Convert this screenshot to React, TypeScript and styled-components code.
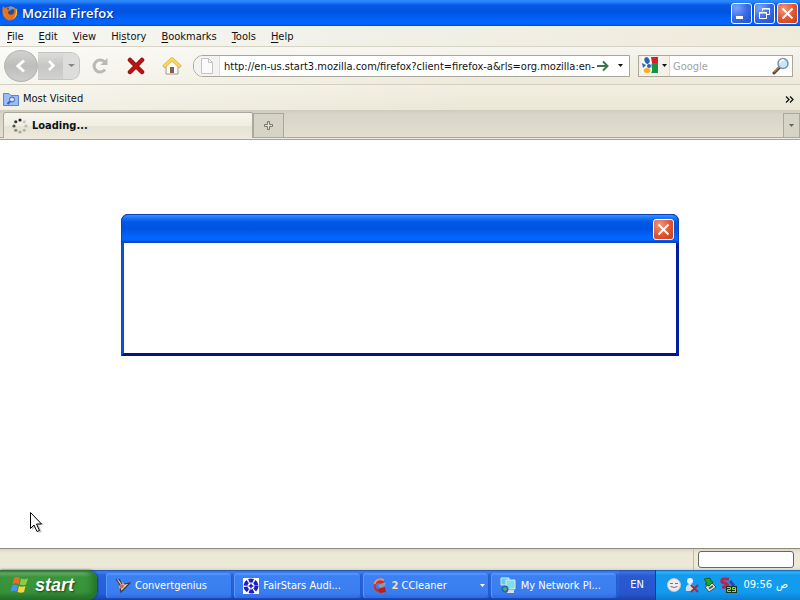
import React from "react";
import styled, { createGlobalStyle } from "styled-components";

const ui = `"DejaVu Sans Condensed", "Noto Sans", "DejaVu Sans", sans-serif`;

const GlobalStyle = createGlobalStyle`
  * { box-sizing: border-box; }
  body { margin: 0; font: 11px/14px ${ui}; color: #111; background: #fff; }
  button, input { font: inherit; color: inherit; margin: 0; padding: 0; border: 0; background: none; }
  button { display: flex; align-items: center; justify-content: center; flex: none; white-space: nowrap; }
  svg { display: block; flex: none; }
`;

const Desktop = styled.div`
  display: flex;
  flex-direction: column;
  min-height: 100vh;
`;

const TitleBar = styled.header`
  display: flex;
  align-items: center;
  height: 26px;
  padding: 0 2px;
  gap: 3px;
  background: linear-gradient(#2f8bfd 0, #2584fa 2px, #0759e4 5px, #0053e1 12px, #0062fb 19px, #0066ff 24px, #0046d6 26px);
`;

const Title = styled.h1`
  flex: 1;
  margin: 0;
  font: 600 13px/18px "Open Sans", "Noto Sans", sans-serif;
  color: #fff;
  text-shadow: 1px 1px 1px #0a2f8c;
`;

const CaptionButton = styled.button<{ $close?: boolean }>`
  width: 21px;
  height: 21px;
  border: 1px solid #fff;
  border-radius: 3px;
  background: ${(p) =>
    p.$close
      ? "radial-gradient(circle at 30% 25%, #f0967c, #e2532f 55%, #c8401c)"
      : "radial-gradient(circle at 25% 20%, #7ba6f5, #3a6be6 50%, #1c4fd0)"};
`;

const CaptionGroup = styled.div`
  display: flex;
  gap: 2px;
`;

const MenuBar = styled.nav`
  display: flex;
  align-items: center;
  gap: 15px;
  height: 21px;
  padding: 1px 7px 0;
  background: linear-gradient(90deg, #f6f6f3, #f1f0e7 50%, #eeebdb);
  border-bottom: 1px solid #d6d3c5;
  u { text-underline-offset: 2px; }
`;

const NavBar = styled.div`
  display: flex;
  align-items: center;
  height: 38px;
  padding: 0 7px 0 4px;
  background: linear-gradient(90deg, rgba(255,255,255,.55), rgba(255,255,255,0) 60%), linear-gradient(#f6f5ee, #edeada);
  border-bottom: 1px solid #d3d0c0;
`;

const History = styled.div`
  display: flex;
  align-items: center;
  height: 32px;
  margin-right: 2px;
`;

const BackButton = styled.button`
  width: 34px;
  height: 32px;
  border: 1px solid #b4b4b2;
  border-radius: 50%;
  background: linear-gradient(#d2d2d1, #bdbdbc 50%, #cecece);
`;

const ForwardGroup = styled.div`
  display: flex;
  height: 28px;
  border: 1px solid #c4c4c2;
  border-left: 0;
  border-radius: 0 9px 9px 0;
  background: linear-gradient(#dcdcda, #c6c6c5 50%, #d2d2d0);
`;

const ForwardButton = styled.button`
  width: 25px;
`;

const HistoryMenu = styled.button`
  width: 16px;
  border-radius: 0 8px 8px 0;
  background: #dddddb;
`;

const ToolButton = styled.button`
  width: 36px;
  height: 30px;
`;

const AddressBox = styled.form`
  display: flex;
  flex: 1;
  min-width: 0;
  height: 22px;
  margin: 0 8px 0 3px;
  border: 1px solid #a9a79c;
  border-radius: 10px 0 0 10px;
  background: #fff;
  overflow: hidden;
`;

const Identity = styled.button`
  width: 26px;
  border-right: 1px solid #dedede;
  background: #f3f3f1;
`;

const AddressInput = styled.input`
  flex: 1;
  min-width: 0;
  padding: 2px 0 0 4px;
  outline: none;
`;

const GoButton = styled.button`
  width: 16px;
`;

const DropButton = styled.button`
  width: 18px;
`;

const SearchBox = styled.form`
  display: flex;
  flex: none;
  width: 155px;
  height: 22px;
  border: 1px solid #a9a79c;
  background: #fff;
`;

const EngineButton = styled.button`
  gap: 3px;
  width: 31px;
  border-right: 1px solid #dbd8ca;
  background: #f4f2e8;
`;

const SearchInput = styled.input`
  flex: 1;
  min-width: 0;
  padding: 2px 3px 0;
  outline: none;
  &::placeholder { color: #a3a3a3; opacity: 1; }
`;

const SearchButton = styled.button`
  width: 22px;
`;

const BookmarkBar = styled.div`
  display: flex;
  align-items: center;
  justify-content: space-between;
  height: 25px;
  padding: 3px 6px 0 3px;
  background: linear-gradient(90deg, rgba(255,255,255,.4), rgba(255,255,255,0) 60%), linear-gradient(#f1efe2, #eae7d6);
`;

const Bookmark = styled.button`
  gap: 4px;
`;

const TabBar = styled.div`
  display: flex;
  align-items: flex-end;
  height: 30px;
  padding: 3px 0 1px 3px;
  border-bottom: 1px solid #a5a398;
  background: linear-gradient(#cfccbf 0, #d8d5c8 4px, #e2dfd1 27px, #aaa89c 27px, #aaa89c 28px, #eeebde 28px);
`;

const Tab = styled.button`
  justify-content: flex-start;
  gap: 4px;
  width: 250px;
  height: 26px;
  padding: 1px 8px 0;
  border: 1px solid #aaa89c;
  border-bottom: 0;
  border-radius: 3px 2px 0 0;
  background: linear-gradient(#f7f6ee, #f0eee2 50%, #e6e3d4 52%, #edeadd);
  font-weight: bold;
`;

const TabTool = styled.button<{ $end?: boolean }>`
  width: ${(p) => (p.$end ? 17 : 31)}px;
  height: 24px;
  margin-left: ${(p) => (p.$end ? "auto" : 0)};
  margin-bottom: 1px;
  border: 1px solid #aaa89c;
  border-bottom: 0;
  background: #d6d3c7;
`;

const Page = styled.main`
  flex: 1;
  padding: 74px 16px;
  background: #fff;
`;

const Dialog = styled.section`
  max-width: 558px;
  margin: 0 auto;
  border: solid #00138c;
  border-color: #0831d9 #001ea0 #00138c #0b4fd8;
  border-width: 0 3px 3px;
  border-radius: 7px 7px 0 0;
  background: #0053e1;
`;

const DialogTitle = styled.div`
  display: flex;
  align-items: center;
  justify-content: flex-end;
  height: 29px;
  margin: 0 -3px;
  padding: 2px 4px 0;
  border: 1px solid #0842bd;
  border-radius: 7px 7px 0 0;
  background: linear-gradient(#3a93ff 0, #1775f5 3px, #0058e6 7px, #0053e1 14px, #0066ff 22px, #0066ff 25px, #0045ca);
`;

const DialogBody = styled.div`
  height: 110px;
  background: #fff;
`;

const StatusBar = styled.footer`
  display: flex;
  align-items: center;
  justify-content: flex-end;
  height: 22px;
  padding: 0 6px 0 0;
  border-top: 1px solid #8d8b80;
  background: linear-gradient(#d9d6c9, #ece9d8 4px, #ece9d8 18px, #d9d5c5);
`;

const StatusPanel = styled.div`
  display: flex;
  align-items: center;
  height: 100%;
  padding-left: 4px;
  border-left: 1px solid #c1bdac;
`;

const Progress = styled.div`
  width: 96px;
  height: 17px;
  border: 1px solid #68675f;
  border-radius: 3px;
  background: #fff;
`;

const TaskBar = styled.footer`
  display: flex;
  height: 30px;
  color: #fff;
  background: linear-gradient(#1c4aa8 0, #3f83ee 2px, #2a63dc 5px, #245edb 24px, #1941a5);
`;

const StartButton = styled.button`
  justify-content: flex-start;
  gap: 5px;
  width: 97px;
  margin-right: 9px;
  padding: 0 0 1px 10px;
  border-radius: 0 9px 9px 0;
  background: linear-gradient(#2a6b2c 0, #6cb06a 3px, #3b953b 7px, #36923a 22px, #226a26);
  box-shadow: inset -5px 0 6px #23752a, 1px 0 2px #173c94;
  font: italic bold 18px/22px "Liberation Sans", Arial, sans-serif;
  color: #fff;
  text-shadow: 1px 1px 2px #143f15;
`;

const Tasks = styled.div`
  display: flex;
  flex: 1;
  gap: 2px;
  min-width: 0;
  padding: 3px 2px 2px 0;
`;

const Task = styled.button`
  flex: 1;
  justify-content: flex-start;
  min-width: 0;
  gap: 4px;
  padding: 0 4px 0 9px;
  border-radius: 3px;
  background: linear-gradient(#5c9bfb 0, #3c81f3 3px, #3a7df0 20px, #2e6be0);
  box-shadow: inset 1px 0 #5a98f8, inset -1px 0 #255bd0;
`;

const TaskLabel = styled.span`
  flex: 1;
  overflow: hidden;
  text-overflow: ellipsis;
  text-align: left;
`;

const Count = styled.b`
  color: #fbd9c4;
`;

const Language = styled.button`
  width: 36px;
  background: linear-gradient(#1c4aa8 0, #3a72e4 2px, #2a59d0 6px, #2756cc 24px, #1a41a5);
`;

const Tray = styled.div`
  display: flex;
  align-items: center;
  gap: 2px;
  width: 145px;
  padding: 0 12px 0 10px;
  border-left: 1px solid #0c3f9c;
  background: linear-gradient(#0c59b9 0, #35b3f8 2px, #149bee 5px, #129cf0 22px, #0d7ed0);
  white-space: nowrap;
`;

const Clock = styled.time`
  display: flex;
  gap: 4px;
  margin-left: auto;
`;

const Cursor = styled.svg`
  position: absolute;
  left: 29px;
  top: 511px;
  pointer-events: none;
`;

const CloseGlyph = () => (
  <svg width="15" height="15" viewBox="0 0 15 15">
    <path d="M2.500 2.500 12.500 12.500M12.500 2.500 2.500 12.500" stroke="#fff" strokeWidth="2" />
  </svg>
);

const Caret = ({ color = "#111", size = 5 }: { color?: string; size?: number }) => (
  <svg width={size} height="3" viewBox="0 0 5 3" preserveAspectRatio="none">
    <path d="M0 0H5L2.500 3Z" fill={color} />
  </svg>
);

const FirefoxIcon = () => (
  <svg width="17" height="18" viewBox="0 0 17 18">
    <circle cx="8.500" cy="8" r="6.500" fill="#2b4b93" />
    <path d="M6 3C9 1 13 3 13 6L10 5 8 7Z" fill="#5fa4dc" />
    <path d="M1 2 3 4C4 3 5 3 6 3L5 5 8 6 6 8C6 11 10 12 12 9 13 7 12 5 11 3 15 4 16 8 15 11 13 17 6 18 3 14 0 11 0 6 1 2Z" fill="#e8721c" />
    <path d="M14 4C16 8 15 13 11 15 14 12 14 9 14 4ZM2 4C1 8 3 12 6 13 3 12 1 9 2 4Z" fill="#ffc949" />
  </svg>
);

const Loader = () => {
  const shades = ["#222", "#c9c9c0", "#b6c0b0", "#b0b5a8", "#a8aaa0", "#888", "#555", "#333"];
  return (
    <svg width="16" height="16" viewBox="0 0 16 16">
      {shades.map((fill, i) => {
        const a = (i * Math.PI) / 4 - Math.PI / 2;
        return <circle key={i} cx={8 + 6 * Math.cos(a)} cy={8 + 6 * Math.sin(a)} r="1.600" fill={fill} />;
      })}
    </svg>
  );
};

const GoogleIcon = () => (
  <svg width="17" height="17" viewBox="0 0 17 17">
    <path d="M0 0H16V16H0Z" fill="#fff" />
    <path d="M9 0H16V6H10Z" fill="#d3222a" />
    <path d="M10 6H16V16H9C12 12 8 10 10 6Z" fill="#169447" />
    <ellipse cx="5" cy="3.500" rx="2.500" ry="3.500" fill="#2b62b4" transform="rotate(-20 5 3.500)" />
    <path d="M0 6 4 8 1 11Z" fill="#2b62b4" />
    <circle cx="7" cy="9" r="2" fill="#2b62b4" />
    <ellipse cx="5" cy="13.500" rx="3.500" ry="2.500" fill="#f4af23" />
  </svg>
);

const HomeIcon = () => (
  <svg width="20" height="18" viewBox="0 0 20 18">
    <path d="M4 8V17H16V8L10 3Z" fill="#fbfaf5" stroke="#9a9a96" />
    <path d="M1.500 10 10 2 18.500 10" fill="none" stroke="#d9a436" strokeWidth="3.500" strokeLinejoin="round" />
    <path d="M2 9.500 10 2 18 9.500" fill="none" stroke="#fbd45a" strokeWidth="2.500" strokeLinejoin="round" />
    <path d="M8 10H12V16H8Z" fill="#8f5748" />
    <path d="M9 11H11V13H9Z" fill="#4b77b8" />
  </svg>
);

const SearchIcon = () => (
  <svg width="18" height="18" viewBox="0 0 18 18">
    <path d="M8 10 2 16" stroke="#5c4435" strokeWidth="3" strokeLinecap="round" />
    <path d="M7.500 9.500 2 15" stroke="#b9835a" strokeWidth="1.500" />
    <circle cx="11" cy="6.500" r="5" fill="#c8e7fa" stroke="#7b93aa" strokeWidth="1.500" />
    <path d="M8 6C8 4 10 3 12 3" stroke="#fff" strokeWidth="1.500" fill="none" />
  </svg>
);

const WindowsLogo = () => (
  <svg width="20" height="18" viewBox="0 0 20 18">
    <path d="M4 2C6 .5 8 1 10 2L8.500 8C6.500 7 4.500 7 2.500 8Z" fill="#ee6a2c" />
    <path d="M11 2.500C13 3.500 15 3.500 18 2.500L16 8.500C14 9.500 12 9.500 9.500 8.500Z" fill="#8ccb45" />
    <path d="M2 9.500C4 8.500 6 8.500 8 9.500L6.500 15.500C4.500 14.500 2.500 14.500.5 15.500Z" fill="#4a92ee" />
    <path d="M9 10C11 11 13 11 15.500 10L14 16C12 17 10 17 7.500 16Z" fill="#fbd334" />
  </svg>
);

const BirdIcon = () => (
  <svg width="16" height="16" viewBox="0 0 16 16">
    <path d="M1 1 3 5 5 7 4 10 6 14 10 10 15 5 9 6 7 4Z" fill="#d9c4ae" />
    <path d="M1 1 5 7M4 1 7 6M5 10 6 14 10 10 15 5 9 6" fill="none" stroke="#3c3a46" strokeWidth="1.200" />
    <path d="M5 6 9 7 8 10 5 10Z" fill="#c77344" />
  </svg>
);

const StarsIcon = () => (
  <svg width="16" height="16" viewBox="0 0 16 16">
    <path d="M0 0H16V16H0Z" fill="#fff" />
    <circle cx="8" cy="8" r="5.500" fill="none" stroke="#1c1cc8" strokeWidth="4" strokeDasharray="4.500 1.260" />
    <path d="M8 5 9 7 11 8 9 9 8 11 7 9 5 8 7 7Z" fill="#1c1cc8" />
  </svg>
);

const CCleanerIcon = () => (
  <svg width="16" height="16" viewBox="0 0 16 16">
    <path d="M13 3.500A6.500 6.500 0 1 0 13 12.500L9 10A3 3 0 1 1 9 6Z" fill="#d52b20" />
    <path d="M12 2.500A6 6 0 0 0 2.500 6" fill="none" stroke="#f18c6b" strokeWidth="2" />
    <path d="M6 7 14 4 13 8 8 10Z" fill="#8e9aac" />
    <path d="M6 11 13 9 14 14 8 15Z" fill="#bf2014" />
  </svg>
);

const NetworkIcon = () => (
  <svg width="17" height="17" viewBox="0 0 17 17">
    <path d="M1 1H9V8H1Z" fill="#5bd0ee" stroke="#dce8f3" />
    <path d="M6 3H15V12H6Z" fill="#7ee0e8" stroke="#dfe7ef" />
    <path d="M8 13H14V16H7Z" fill="#d9dcda" />
    <circle cx="5" cy="12" r="3.500" fill="#2a64bb" />
    <path d="M3 11 6 10 7 13 4 14Z" fill="#57b45c" />
  </svg>
);

const FaceIcon = () => (
  <svg width="16" height="16" viewBox="0 0 16 16">
    <circle cx="8" cy="8" r="6.500" fill="#f2eded" stroke="#c4c5cc" />
    <path d="M4 6.500H7M9 6.500H12M4.500 9.500Q8 11.500 11.500 9.500" stroke="#77717c" fill="none" />
  </svg>
);

const MessengerIcon = () => (
  <svg width="16" height="16" viewBox="0 0 16 16">
    <circle cx="6" cy="4" r="3" fill="#eef4f8" />
    <path d="M2 14C1 9 4 7 6 7 9 7 11 9 10 14Z" fill="#cfe1ee" />
    <path d="M7 8 14 15M14 8 7 15" stroke="#bd1f34" strokeWidth="2" />
  </svg>
);

const DeviceIcon = () => (
  <svg width="16" height="16" viewBox="0 0 16 16">
    <path d="M3 10 10 6 14 10 7 15Z" fill="#dbe0dc" stroke="#465448" />
    <path d="M2 2 8 1 9 4 11 5 7 9 3 7 5 6Z" fill="#23a331" stroke="#12661d" />
    <path d="M7 11.500 11 9" stroke="#4a5850" strokeWidth="2" />
  </svg>
);

const GaugeIcon = () => (
  <svg width="17" height="17" viewBox="0 0 17 17">
    <path d="M9 2H4Q1 2 2 5L7 7Q9 9 6 10H2" fill="none" stroke="#bd2349" strokeWidth="3" />
    <path d="M10 4 14 9" stroke="#2844be" strokeWidth="3" />
    <path d="M6 9H17V16H6Z" fill="#183417" />
    <path d="M7 10.500H10.500V12.500H7.500V14.500H11M15.500 15V10.500H12.500V12.500H15.500M12 14.500H15.500" fill="none" stroke="#8fe622" />
  </svg>
);

const menus = ["File", "Edit", "View", "History", "Bookmarks", "Tools", "Help"];
const accelerators: Record<string, number> = { History: 2 };

export default function App() {
  return (
    <>
      <GlobalStyle />
      <Desktop>
        <TitleBar>
          <FirefoxIcon />
          <Title>Mozilla Firefox</Title>
          <CaptionGroup>
            <CaptionButton aria-label="Minimize">
              <svg width="15" height="15" viewBox="0 0 15 15"><path d="M2 10H9V13H2Z" fill="#fff" /></svg>
            </CaptionButton>
            <CaptionButton aria-label="Restore">
              <svg width="15" height="15" viewBox="0 0 15 15">
                <path d="M5.500 5V2.500H12.500V8.500H10M5 3H13" fill="none" stroke="#fff" />
                <path d="M2.500 6.500H9.500V12.500H2.500ZM2 7H10" fill="none" stroke="#fff" />
              </svg>
            </CaptionButton>
            <CaptionButton $close aria-label="Close"><CloseGlyph /></CaptionButton>
          </CaptionGroup>
        </TitleBar>

        <MenuBar>
          {menus.map((m) => {
            const k = accelerators[m] ?? 0;
            return <button key={m}><span>{m.slice(0, k)}<u>{m[k]}</u>{m.slice(k + 1)}</span></button>;
          })}
        </MenuBar>

        <NavBar>
          <History>
            <BackButton aria-label="Back">
              <svg width="12" height="14" viewBox="0 0 12 14"><path d="M9 1.500 3 7 9 12.500" fill="none" stroke="#fff" strokeWidth="3" /></svg>
            </BackButton>
            <ForwardGroup>
              <ForwardButton aria-label="Forward">
                <svg width="10" height="11" viewBox="0 0 10 11"><path d="M3 1 7.500 5.500 3 10" fill="none" stroke="#fff" strokeWidth="2.500" /></svg>
              </ForwardButton>
              <HistoryMenu aria-label="Recent pages"><Caret color="#858585" size={7} /></HistoryMenu>
            </ForwardGroup>
          </History>
          <ToolButton aria-label="Reload">
            <svg width="18" height="18" viewBox="0 0 18 18">
              <path d="M13.500 5A6 6 0 1 0 14 12.500" fill="none" stroke="#b9b9b5" strokeWidth="3" />
              <path d="M16.500 1V8H9.500Z" fill="#b9b9b5" />
            </svg>
          </ToolButton>
          <ToolButton aria-label="Stop">
            <svg width="18" height="18" viewBox="0 0 18 18">
              <path d="M3 3 15 15M15 3 3 15" stroke="#850e0e" strokeWidth="4.500" strokeLinecap="round" />
              <path d="M3 3 15 15M15 3 3 15" stroke="#c01212" strokeWidth="3" strokeLinecap="round" />
            </svg>
          </ToolButton>
          <ToolButton aria-label="Home"><HomeIcon /></ToolButton>
          <AddressBox>
            <Identity type="button" aria-label="Site identity">
              <svg width="14" height="16" viewBox="0 0 14 16"><path d="M1.500.5H8.500L12.500 4.500V15.500H1.500ZM8.500.5V4.500H12.500" fill="#fafafa" stroke="#c4c4c4" /></svg>
            </Identity>
            <AddressInput aria-label="Address" defaultValue="http://en-us.start3.mozilla.com/firefox?client=firefox-a&rls=org.mozilla:en-" />
            <GoButton type="button" aria-label="Go">
              <svg width="12" height="12" viewBox="0 0 12 12"><path d="M0 6H10M6 1.500 10.500 6 6 10.500" fill="none" stroke="#39754a" strokeWidth="2" /></svg>
            </GoButton>
            <DropButton type="button" aria-label="Show history"><Caret /></DropButton>
          </AddressBox>
          <SearchBox>
            <EngineButton type="button" aria-label="Search engine"><GoogleIcon /><Caret /></EngineButton>
            <SearchInput aria-label="Search" placeholder="Google" />
            <SearchButton type="button" aria-label="Search"><SearchIcon /></SearchButton>
          </SearchBox>
        </NavBar>

        <BookmarkBar>
          <Bookmark>
            <svg width="16" height="15" viewBox="0 0 16 15">
              <path d="M.5 1.500H6L8 3.500H15.500V13.500H.5Z" fill="#9bbcf2" stroke="#5c84cf" />
              <circle cx="9" cy="7.500" r="2.500" fill="#d5e5fb" stroke="#2f5fb8" />
              <path d="M7 9.500 4.500 12" stroke="#2f5fb8" strokeWidth="2" />
            </svg>
            Most Visited
          </Bookmark>
          <button aria-label="More bookmarks">
            <svg width="9" height="7" viewBox="0 0 9 7"><path d="M1 .5 4 3.500 1 6.500M5 .5 8 3.500 5 6.500" fill="none" stroke="#111" strokeWidth="1.300" /></svg>
          </button>
        </BookmarkBar>

        <TabBar>
          <Tab><Loader />Loading...</Tab>
          <TabTool aria-label="New tab">
            <svg width="9" height="9" viewBox="0 0 9 9"><path d="M3.500.5H5.500V3.500H8.500V5.500H5.500V8.500H3.500V5.500H.5V3.500H3.500Z" fill="#e7e5dc" stroke="#77756d" /></svg>
          </TabTool>
          <TabTool $end aria-label="List all tabs"><Caret color="#66645e" /></TabTool>
        </TabBar>

        <Page>
          <Dialog role="dialog" aria-label="Message">
            <DialogTitle><CaptionButton $close aria-label="Close dialog"><CloseGlyph /></CaptionButton></DialogTitle>
            <DialogBody />
          </Dialog>
        </Page>

        <StatusBar><StatusPanel><Progress /></StatusPanel></StatusBar>

        <TaskBar>
          <StartButton><WindowsLogo />start</StartButton>
          <Tasks>
            <Task><BirdIcon /><TaskLabel>Convertgenius</TaskLabel></Task>
            <Task><StarsIcon /><TaskLabel>FairStars Audi...</TaskLabel></Task>
            <Task><CCleanerIcon /><TaskLabel><Count>2</Count> CCleaner</TaskLabel><Caret color="#fff" /></Task>
            <Task><NetworkIcon /><TaskLabel>My Network Pl...</TaskLabel></Task>
          </Tasks>
          <Language>EN</Language>
          <Tray>
            <FaceIcon /><MessengerIcon /><DeviceIcon /><GaugeIcon />
            <Clock><span>09:56</span><span lang="ar">ص</span></Clock>
          </Tray>
        </TaskBar>
      </Desktop>
      <Cursor width="17" height="23" viewBox="0 0 17 23">
        <path d="M3 3V19L7 15.500 10 22 13 21 10 14H15Z" fill="#000" opacity=".2" />
        <path d="M1.500 1.500V17.500L5 14 8 20.500 10.500 19.500 7.500 13H12.500Z" fill="#fff" stroke="#000" />
      </Cursor>
    </>
  );
}
